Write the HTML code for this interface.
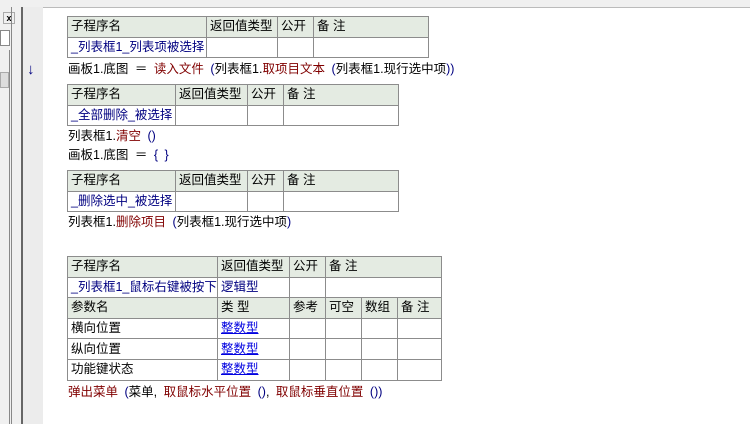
<!DOCTYPE html>
<html><head><meta charset="utf-8"><style>
body{margin:0;width:750px;height:424px;overflow:hidden;background:#fff;position:relative;font-family:"Liberation Sans","Noto Sans CJK SC","WenQuanYi Zen Hei",sans-serif;font-size:12.5px;color:#000}
.a{position:absolute}
table{position:absolute;border-collapse:collapse;table-layout:fixed}
td{border:1px solid #8c8c8c;height:19.6px;padding:0 0 0 3px;white-space:nowrap;overflow:hidden;line-height:19px}
.h td{background:#e4ebe2}
.b{color:#000080}
.r{color:#800000}
.u{color:#0000e0;text-decoration:underline}
.t{position:absolute;left:68px;white-space:nowrap;line-height:16px;word-spacing:3px}
</style></head><body>
<div class="a" style="left:0;top:0;width:750px;height:7px;background:#f0f0f0;border-bottom:1px solid #bbb"></div>
<div class="a" style="left:0;top:7px;width:22px;height:417px;background:#f0f0f0"></div>
<div class="a" style="left:3px;top:12px;width:10px;height:10px;border:1px solid #aaa;font-size:9px;line-height:10px;text-align:center;font-weight:bold">x</div>
<div class="a" style="left:0;top:30px;width:8px;height:14px;border:1px solid #888;background:#fff"></div>
<div class="a" style="left:0;top:50px;width:9px;height:374px;border-right:1px solid #888"></div>
<div class="a" style="left:0;top:72px;width:7px;height:14px;border:1px solid #aaa;background:#ddd"></div>
<div class="a" style="left:11px;top:7px;width:1px;height:417px;background:#888"></div>
<div class="a" style="left:21px;top:7px;width:2px;height:417px;background:#666"></div>
<div class="a" style="left:23px;top:7px;width:20px;height:417px;background:#ececec"></div>
<div class="a" style="left:27px;top:61px;color:#000080;font-size:15px;font-weight:bold">↓</div>

<table style="left:67px;top:16px;width:361px">
<col style="width:139px"><col style="width:71px"><col style="width:36px"><col style="width:115px">
<tr class="h"><td>子程序名</td><td>返回值类型</td><td>公开</td><td>备 注</td></tr>
<tr><td class="b">_列表框1_列表项被选择</td><td></td><td></td><td></td></tr>
</table>
<div class="t" style="top:61px">画板1.底图 ＝ <span class="r">读入文件</span> <span class="b">(</span>列表框1.<span class="r">取项目文本</span> <span class="b">(</span>列表框1.现行选中项<span class="b">))</span></div>

<table style="left:67px;top:84px;width:331px">
<col style="width:108px"><col style="width:72px"><col style="width:36px"><col style="width:115px">
<tr class="h"><td>子程序名</td><td>返回值类型</td><td>公开</td><td>备 注</td></tr>
<tr><td class="b">_全部删除_被选择</td><td></td><td></td><td></td></tr>
</table>
<div class="t" style="top:128px">列表框1.<span class="r">清空</span> <span class="b">()</span></div>
<div class="t" style="top:147px">画板1.底图 ＝ <span class="b">{ }</span></div>

<table style="left:67px;top:170px;width:331px">
<col style="width:108px"><col style="width:72px"><col style="width:36px"><col style="width:115px">
<tr class="h"><td>子程序名</td><td>返回值类型</td><td>公开</td><td>备 注</td></tr>
<tr><td class="b">_删除选中_被选择</td><td></td><td></td><td></td></tr>
</table>
<div class="t" style="top:214px">列表框1.<span class="r">删除项目</span> <span class="b">(</span>列表框1.现行选中项<span class="b">)</span></div>

<table style="left:67px;top:256px;width:374px">
<col style="width:150px"><col style="width:72px"><col style="width:36px"><col style="width:36px"><col style="width:36px"><col style="width:44px">
<tr class="h"><td>子程序名</td><td>返回值类型</td><td>公开</td><td colspan="3">备 注</td></tr>
<tr><td class="b">_列表框1_鼠标右键被按下</td><td class="b">逻辑型</td><td></td><td colspan="3"></td></tr>
<tr class="h"><td>参数名</td><td>类 型</td><td>参考</td><td>可空</td><td>数组</td><td>备 注</td></tr>
<tr><td>横向位置</td><td class="u">整数型</td><td></td><td></td><td></td><td></td></tr>
<tr><td>纵向位置</td><td class="u">整数型</td><td></td><td></td><td></td><td></td></tr>
<tr><td>功能键状态</td><td class="u">整数型</td><td></td><td></td><td></td><td></td></tr>
</table>
<div class="t" style="top:384px"><span class="r">弹出菜单</span> <span class="b">(</span>菜单, <span class="r">取鼠标水平位置</span> <span class="b">()</span>, <span class="r">取鼠标垂直位置</span> <span class="b">())</span></div>
</body></html>
